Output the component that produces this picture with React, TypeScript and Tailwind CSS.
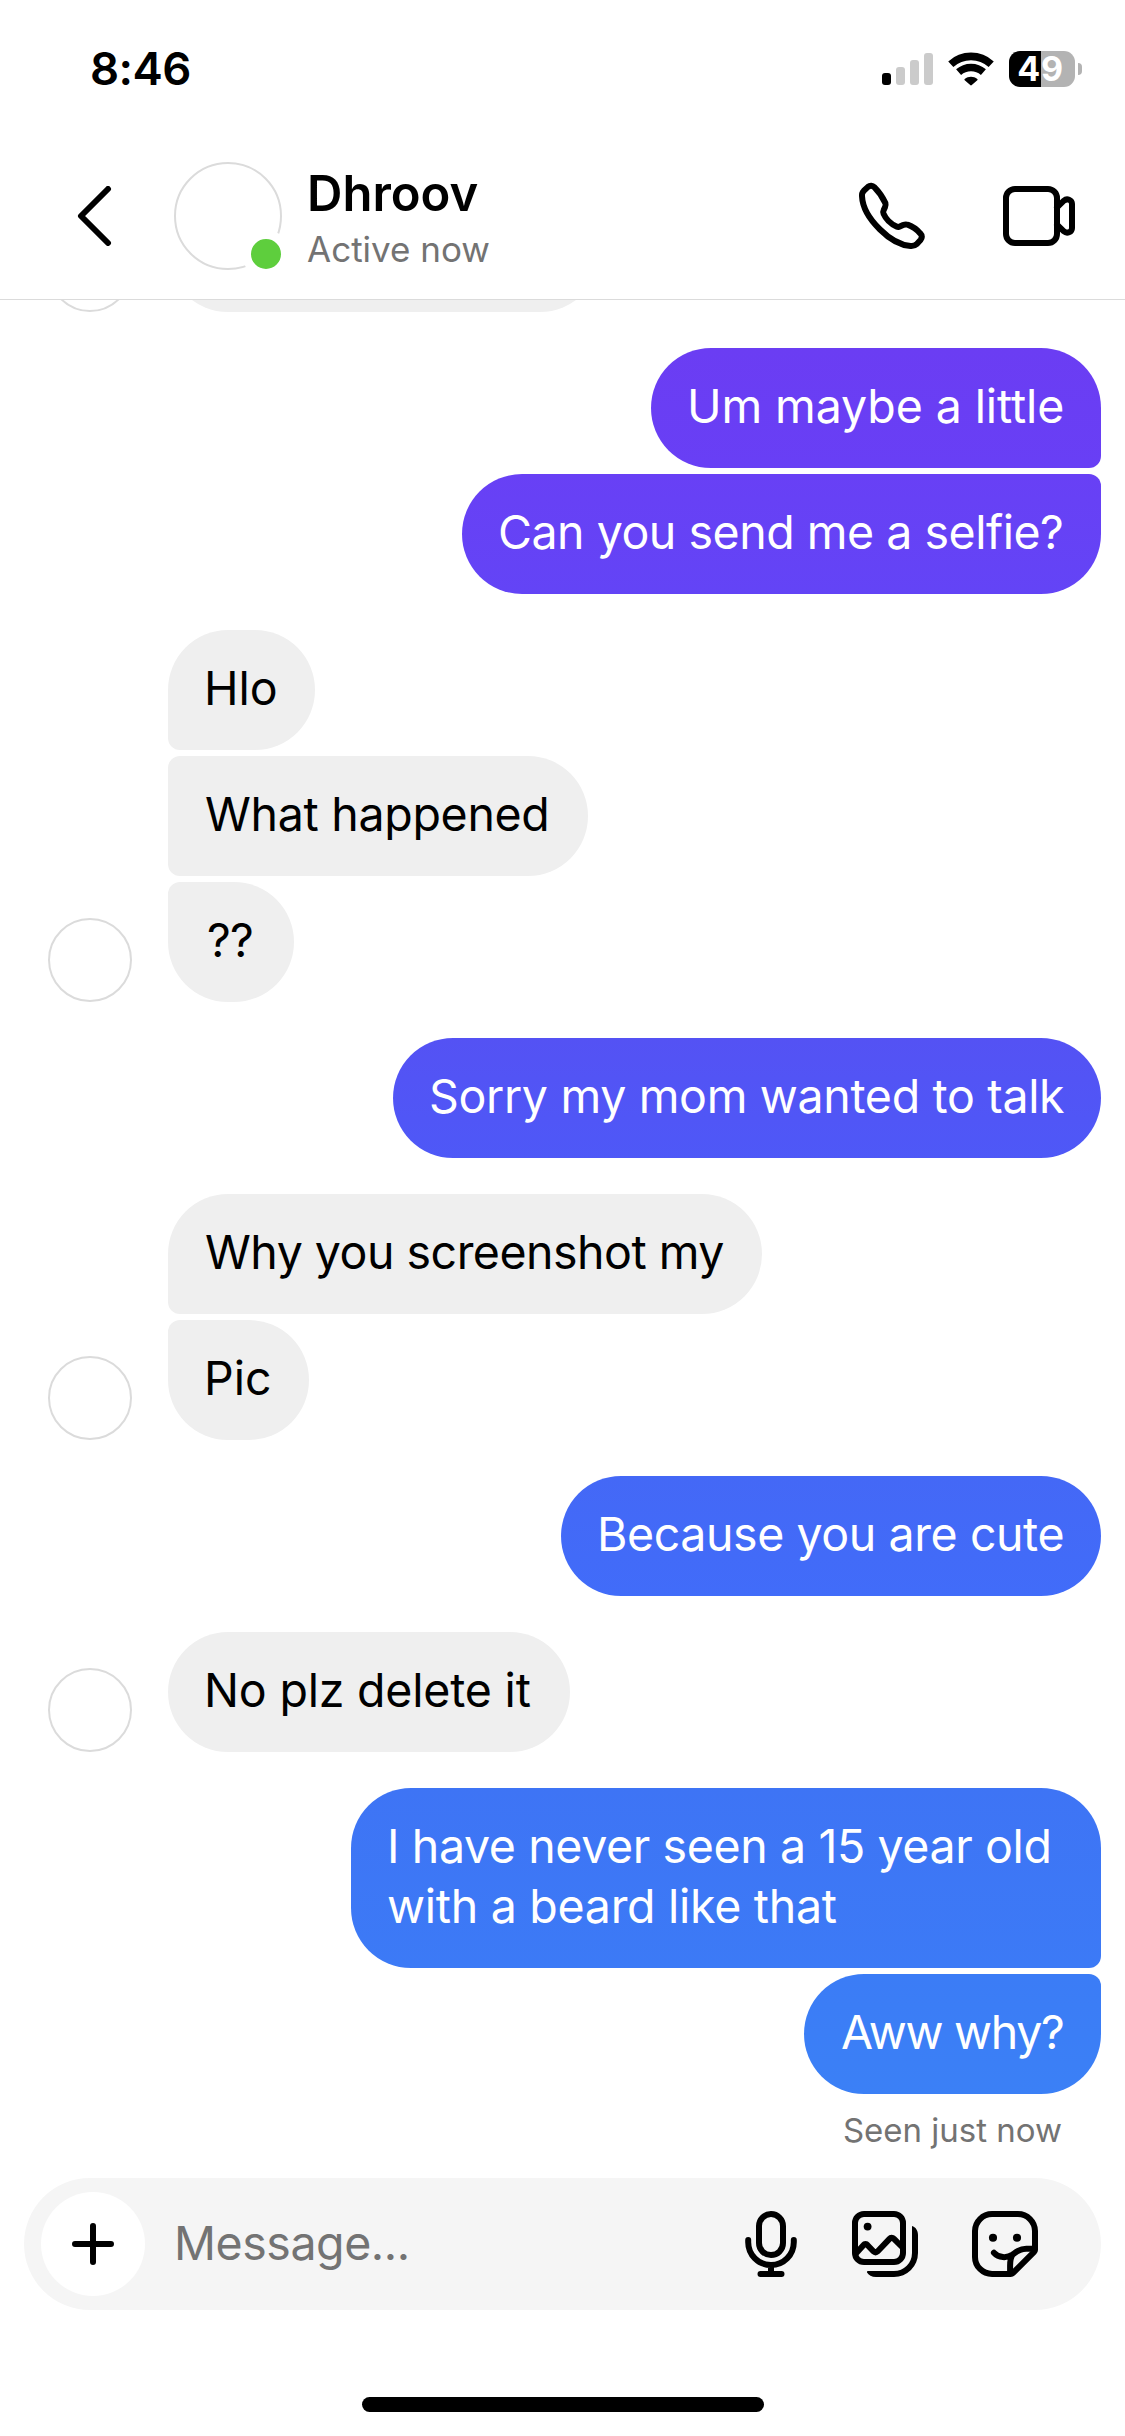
import type { ReactNode } from "react";

type Message = { lines: string[]; box: string; tracking?: string[] };
type Group = { from: "me" | "them"; messages: Message[] };

const groups: Group[] = [
  {
    from: "me",
    messages: [
      {
        lines: ["Um maybe a little"],
        box: "w-[450px] rounded-[60px] rounded-br-[12px] from-[#6b3df3] to-[#683ff5]",
        tracking: ["tracking-[-0.1px]"],
      },
      {
        lines: ["Can you send me a selfie?"],
        box: "w-[639px] rounded-[60px] rounded-tr-[12px] from-[#6840f5] to-[#6344f6]",
        tracking: ["tracking-[-0.48px]"],
      },
    ],
  },
  {
    from: "them",
    messages: [
      { lines: ["Hlo"], box: "w-[147px] rounded-[60px] rounded-bl-[12px]" },
      { lines: ["What happened"], box: "w-[420px] rounded-[60px] rounded-l-[12px]", tracking: ["pl-px tracking-[-0.3px]"] },
      { lines: ["??"], box: "w-[126px] rounded-[60px] rounded-tl-[12px]", tracking: ["pl-[3px] tracking-[-0.8px]"] },
    ],
  },
  {
    from: "me",
    messages: [
      {
        lines: ["Sorry my mom wanted to talk"],
        box: "w-[708px] rounded-[60px] from-[#5452f4] to-[#4e58f7]",
        tracking: ["tracking-[-0.33px]"],
      },
    ],
  },
  {
    from: "them",
    messages: [
      {
        lines: ["Why you screenshot my"],
        box: "w-[594px] rounded-[60px] rounded-bl-[12px]",
        tracking: ["pl-px tracking-[-0.5px]"],
      },
      { lines: ["Pic"], box: "w-[141px] rounded-[60px] rounded-tl-[12px]" },
    ],
  },
  {
    from: "me",
    messages: [
      {
        lines: ["Because you are cute"],
        box: "w-[540px] rounded-[60px] from-[#4468f6] to-[#416cf9]",
        tracking: ["tracking-[-0.42px]"],
      },
    ],
  },
  {
    from: "them",
    messages: [{ lines: ["No plz delete it"], box: "w-[402px] rounded-[60px]", tracking: ["tracking-[-0.2px]"] }],
  },
  {
    from: "me",
    messages: [
      {
        lines: ["I have never seen a 15 year old", "with a beard like that"],
        box: "w-[750px] rounded-[60px] rounded-br-[12px] from-[#3e74f5] to-[#3c7af6]",
        tracking: ["tracking-[-0.38px]", "tracking-[-0.28px]"],
      },
      {
        lines: ["Aww why?"],
        box: "w-[297px] rounded-[60px] rounded-tr-[12px] from-[#3b7cf6] to-[#3b80f6]",
        tracking: ["pl-px tracking-[-1.3px]"],
      },
    ],
  },
];

function Icon({ children, className = "" }: { children: ReactNode; className?: string }) {
  return (
    <svg
      viewBox="0 0 24 24"
      fill="none"
      stroke="currentColor"
      strokeWidth="2"
      strokeLinecap="round"
      strokeLinejoin="round"
      className={`size-[72px] shrink-0 ${className}`}
    >
      {children}
    </svg>
  );
}

function StatusBar() {
  return (
    <div className="flex h-[132px] items-start pl-[90px] pr-[43px] pt-[51px]">
      <span className="flex-1 text-[45.5px] font-semibold leading-[36px] tracking-[-0.6px]">8:46</span>
      <div className="flex h-[34px] items-end gap-[5px]">
        <i className="h-[12px] w-[9px] rounded-[3px] bg-black" />
        <i className="h-[18px] w-[9px] rounded-[3px] bg-[#cbcbcb]" />
        <i className="h-[25px] w-[9px] rounded-[3px] bg-[#cbcbcb]" />
        <i className="h-[32px] w-[9px] rounded-[3px] bg-[#cbcbcb]" />
      </div>
      <svg viewBox="0 0 46 36" className="ml-[15px] h-[36px] w-[46px]" fill="none" stroke="#000" strokeWidth="7.6">
        <path d="M2.8 13.2a29.9 29.9 0 0 1 40.4 0" />
        <path d="M10.6 21.2a18.9 18.9 0 0 1 24.8 0" />
        <path
          d="M16.7 28c3.5-3.1 9.1-3.1 12.6 0 .5.4.5.8 0 1.2l-5.5 4.8c-.5.5-1.1.5-1.6 0l-5.5-4.8c-.5-.4-.5-.8 0-1.2Z"
          fill="#000"
          stroke="none"
        />
      </svg>
      <div className="ml-[15px] flex h-[36px] w-[66px] items-center justify-center rounded-[11px] bg-[linear-gradient(90deg,#000_32px,#b3b3b3_32px)] pr-[3px] text-[34px] font-bold leading-[36px] tracking-[0.6px] text-white">
        49
      </div>
      <i className="ml-[3px] mt-[12px] h-[12px] w-[4px] rounded-r-[4px] bg-[#b3b3b3]" />
    </div>
  );
}

function Header() {
  return (
    <header className="flex h-[168px] items-start border-b border-[#dbdbdb] pl-[66px] pr-[50px] pt-[30px]">
      <svg viewBox="0 0 60 60" className="mt-[24px] size-[60px]" fill="none" stroke="#000" strokeWidth="6" strokeLinecap="round" strokeLinejoin="round">
        <path d="M42 3 15 30 42 57" />
      </svg>
      <div className="relative ml-[48px] size-[108px] rounded-full border-2 border-[#dbdbdb]">
        <i className="absolute left-[66px] top-[66px] size-[48px] rounded-full border-[9px] border-white bg-[#5ece3d]" />
      </div>
      <div className="ml-[25px] flex-1 pt-[2px]">
        <h1 className="text-[49px] font-semibold leading-[60px]">Dhroov</h1>
        <p className="mt-[1px] text-[35px] leading-[48px] text-[#737373]">Active now</p>
      </div>
      <Icon className="mt-[18px]">
        <path d="M4 2.3 2.6 3.6C2.1 4.1 1.900 4.700 2 5.400 2.200 9.700 5 13.600 8 16.500c2.900 2.900 6.400 5.200 10.200 5.500.8.050 1.500-.1 2-.6l1.300-1.400c.6-.7.6-1.500 0-2.100-1.100-1.300-2.600-2.400-4.300-3-.5-.2-1-.1-1.500.1l-1.100.5c-.3.2-.7.2-1.100 0-2-.9-3.500-2.400-4.300-4.200-.2-.4-.2-.8 0-1.200l.5-1.100c.2-.4.2-.9.1-1.300C9 6 7.600 3.900 6.100 2.400 5.500 1.800 4.700 1.700 4 2.300Z" />
      </Icon>
      <Icon className="ml-[75px] mt-[18px]">
        <rect x="1" y="3" width="17" height="18" rx="3" />
        <path d="M18 9.100 20.300 6.900C21.300 6 23 6.600 23 8v8c0 1.400-1.700 2-2.700 1.100L18 14.900" />
      </Icon>
    </header>
  );
}

function Avatar() {
  return <div className="size-[84px] shrink-0 rounded-full border-2 border-[#dbdbdb]" />;
}

function Bubble({ message, mine }: { message: Message; mine: boolean }) {
  const tone = mine ? "bg-linear-to-b text-white" : "bg-[#efefef] text-black";
  return (
    <div className={`px-[36px] pb-[32px] pt-[28px] text-[46.5px] leading-[60px] whitespace-nowrap ${tone} ${message.box}`}>
      {message.lines.map((line, i) => (
        <p key={line} className={message.tracking?.[i]}>
          {line}
        </p>
      ))}
    </div>
  );
}

function MessageGroup({ group }: { group: Group }) {
  const mine = group.from === "me";
  return (
    <div className={`flex items-end gap-[36px] ${mine ? "justify-end" : ""}`}>
      {!mine && <Avatar />}
      <div className={`flex flex-col gap-[6px] ${mine ? "items-end" : "items-start"}`}>
        {group.messages.map((m) => (
          <Bubble key={m.lines[0]} message={m} mine={mine} />
        ))}
      </div>
    </div>
  );
}

function Composer() {
  return (
    <div className="mx-[24px] flex h-[132px] shrink-0 items-center rounded-full bg-[#f5f5f5] pl-[17px] pr-[60px]">
      <div className="flex size-[104px] shrink-0 items-center justify-center rounded-full bg-white">
        <svg viewBox="0 0 42 42" className="size-[42px]" fill="none" stroke="#000" strokeWidth="6" strokeLinecap="round">
          <path d="M21 3v36M3 21h36" />
        </svg>
      </div>
      <span className="mb-[2px] ml-[29px] flex-1 text-[46.5px] leading-[60px] tracking-[-0.45px] text-[#737373]">Message...</span>
      <Icon>
        <rect x="8" y="2" width="8" height="13.700" rx="4" />
        <path d="M4.400 10.700v.7a7.600 7.600 0 0 0 15.200 0v-.7M12 19v3M8.500 22h7" />
      </Icon>
      <Icon className="ml-[42px]">
        <rect x="2" y="2" width="16" height="16" rx="3" />
        <path d="M2.300 15.200 4.800 12.400c.4-.5 1-.5 1.400 0l2 2.100c.4.400.9.400 1.300 0l4-4.200c.4-.5 1-.5 1.500 0l2.700 2.700" />
        <circle cx="6.200" cy="6.200" r="1.300" fill="currentColor" stroke="none" />
        <path
          d="M21 6c1.200.3 2 1.500 2 3v6a8 8 0 0 1-8 8H9c-1.400 0-2.500-.6-3-1.500-.1-.3.100-.5.400-.5H15a6 6 0 0 0 6-6Z"
          fill="currentColor"
          stroke="none"
        />
      </Icon>
      <Icon className="ml-[48px]">
        <path d="M22 14V7.700A5.700 5.700 0 0 0 16.300 2H7.700A5.700 5.700 0 0 0 2 7.700v8.600A5.700 5.700 0 0 0 7.700 22h6.200c.3 0 .5-.1.700-.3l7.100-7.100c.200-.2.300-.4.300-.6Z" />
        <path d="M8.300 14.900c1.600 1.800 4.300 1.900 6.300.6 1.400-1.200 2.700-1.900 4.500-1.900h2.600M14.600 15.500c-.7.900-.9 2.300-.9 3.700V21.500" />
        <circle cx="8" cy="9.900" r="1.350" fill="currentColor" stroke="none" />
        <circle cx="16" cy="9.900" r="1.350" fill="currentColor" stroke="none" />
      </Icon>
    </div>
  );
}

export default function App() {
  return (
    <div className="flex h-[2436px] w-[1125px] flex-col overflow-hidden bg-white font-['Inter','Liberation_Sans',sans-serif] text-black">
      <StatusBar />
      <Header />
      <main className="flex h-[1878px] shrink-0 flex-col overflow-hidden pl-[48px] pr-[24px]">
        <div className="-mt-[108px] flex shrink-0 items-end gap-[36px]">
          <Avatar />
          <div className="h-[120px] w-[432px] rounded-[60px] bg-[#efefef]" />
        </div>
        <div className="mt-[36px] flex flex-col gap-[36px]">
          {groups.map((g, i) => (
            <MessageGroup key={i} group={g} />
          ))}
        </div>
        <p className="mr-[39px] mt-[12px] self-end text-[33px] leading-[48px] text-[#737373]">Seen just now</p>
      </main>
      <Composer />
      <div className="mx-auto mt-[87px] h-[15px] w-[402px] shrink-0 rounded-full bg-black" />
    </div>
  );
}
